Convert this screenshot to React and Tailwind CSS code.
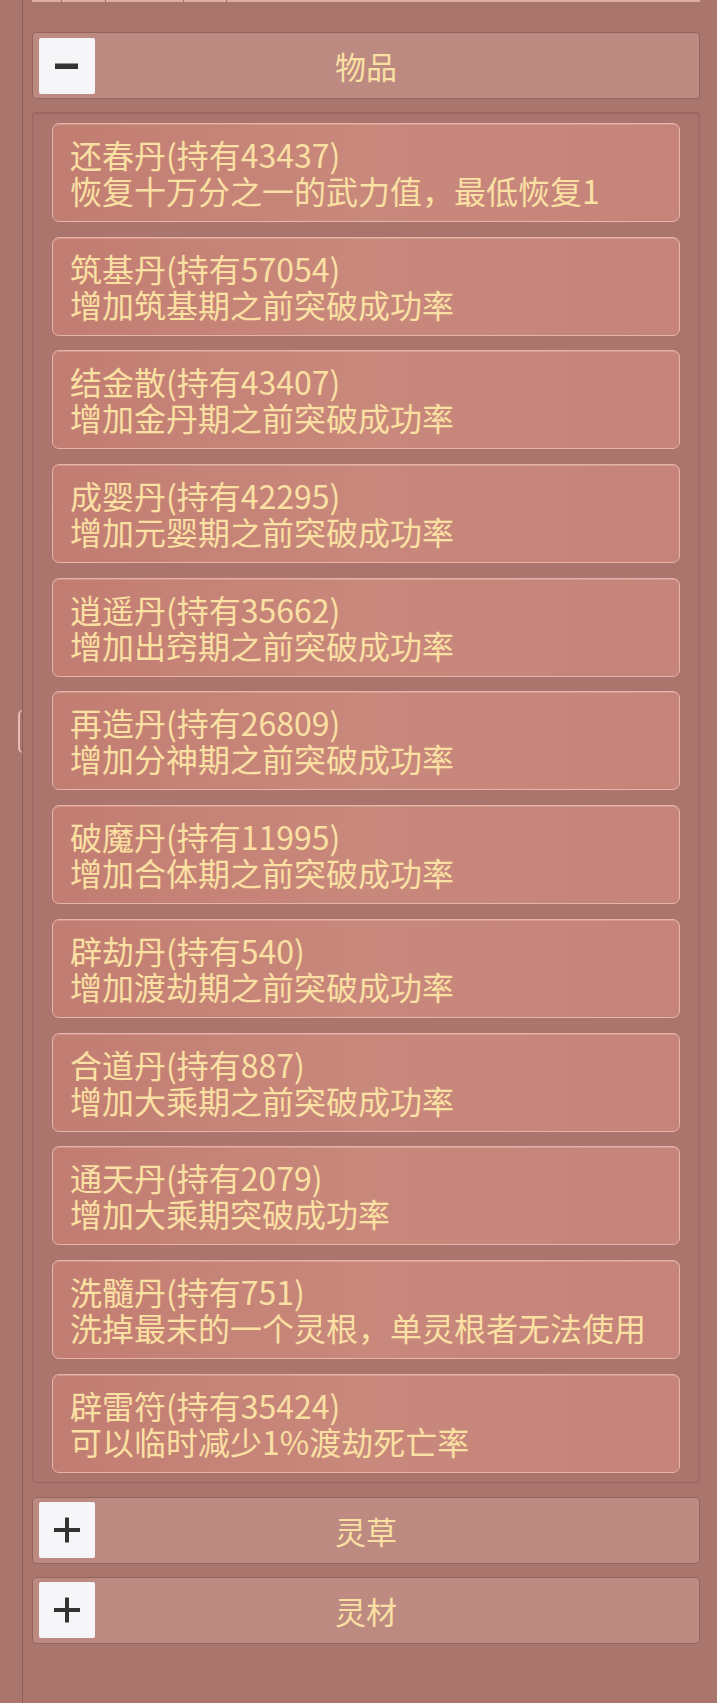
import { useState } from "react";

const items = [
  ["还春丹(持有43437)", "恢复十万分之一的武力值，最低恢复1"],
  ["筑基丹(持有57054)", "增加筑基期之前突破成功率"],
  ["结金散(持有43407)", "增加金丹期之前突破成功率"],
  ["成婴丹(持有42295)", "增加元婴期之前突破成功率"],
  ["逍遥丹(持有35662)", "增加出窍期之前突破成功率"],
  ["再造丹(持有26809)", "增加分神期之前突破成功率"],
  ["破魔丹(持有11995)", "增加合体期之前突破成功率"],
  ["辟劫丹(持有540)", "增加渡劫期之前突破成功率"],
  ["合道丹(持有887)", "增加大乘期之前突破成功率"],
  ["通天丹(持有2079)", "增加大乘期突破成功率"],
  ["洗髓丹(持有751)", "洗掉最末的一个灵根，单灵根者无法使用"],
  ["辟雷符(持有35424)", "可以临时减少1%渡劫死亡率"],
];

function SectionHeader({ title, open, onToggle }) {
  return (
    <div className="h-[67px] rounded-[4px] border border-[#96625b] bg-[#bd8a82] flex items-center px-[6px]">
      <button
        onClick={onToggle}
        className="w-[56px] h-[56px] bg-[#f6f6f8] rounded-[2px] flex items-center justify-center shrink-0"
      >
        <svg width="28" height="28" viewBox="0 0 28 28">
          {open && <rect x="2" y="11.5" width="23" height="5.5" fill="#333" />}
          {!open && <rect x="12" y="1.5" width="4" height="25" fill="#333" />}
          {!open && <rect x="1" y="12" width="26" height="4" fill="#333" />}
        </svg>
      </button>
      <div className="flex-1 text-center text-[31px] leading-none text-[#fbe0a3]">{title}</div>
      <div className="w-[56px] shrink-0" />
    </div>
  );
}

export default function App() {
  const [open, setOpen] = useState({ a: true, b: false, c: false });

  return (
    <div
      className="min-h-[1703px] w-full bg-[#a9756d] flex"
      style={{ fontFamily: '"Noto Sans CJK SC", "Noto Sans", sans-serif' }}
    >
      {/* left strip with drawer handle */}
      <div className="w-[22px] shrink-0 relative">
        <div className="absolute left-[18px] top-[710px] w-[5px] h-[43px] rounded-l-full border-l-2 border-y border-[#e9bdb2]" />
      </div>

      <div className="flex-1 border-l border-[#8c5c55] pl-[9px] pr-[17px] pb-[20px] relative">
        {/* top tab edges */}
        <div className="h-[2px] bg-[#dcaea2] flex">
          <div className="w-[29px]" />
          <div className="w-[1px] bg-[#9c6a62]" />
          <div className="w-[43px]" />
          <div className="w-[1px] bg-[#9c6a62]" />
          <div className="w-[77px]" />
          <div className="w-[1px] bg-[#9c6a62]" />
          <div className="w-[42px]" />
          <div className="w-[1px] bg-[#9c6a62]" />
        </div>

        <div className="pt-[30px]">
          <SectionHeader title="物品" open={open.a} onToggle={() => setOpen({ ...open, a: !open.a })} />

          {open.a && (
            <div className="mt-[13px] rounded-[3px] border border-[#9b665f] bg-[#ab746d] pt-[10px] pb-[9px] px-[19px] flex flex-col gap-[14.7px] shadow-[inset_0_1px_2px_rgba(0,0,0,0.08)]">
              {items.map(([name, desc]) => (
                <div
                  key={name}
                  className="h-[99px] rounded-[7px] border border-[#e6b5a8] bg-gradient-to-r from-[#c27d72] via-[#c9887c] to-[#c5837a] pt-[12px] pl-[17px] text-[32px] leading-[36px] text-[#fbe0a3] shadow-[inset_0_1px_0_rgba(255,220,210,0.25)]"
                >
                  <div className="whitespace-nowrap">{name}</div>
                  <div className="whitespace-nowrap">{desc}</div>
                </div>
              ))}
            </div>
          )}

          <div className="mt-[14px]">
            <SectionHeader title="灵草" open={open.b} onToggle={() => setOpen({ ...open, b: !open.b })} />
          </div>
          <div className="mt-[13px]">
            <SectionHeader title="灵材" open={open.c} onToggle={() => setOpen({ ...open, c: !open.c })} />
          </div>
        </div>
      </div>
    </div>
  );
}
